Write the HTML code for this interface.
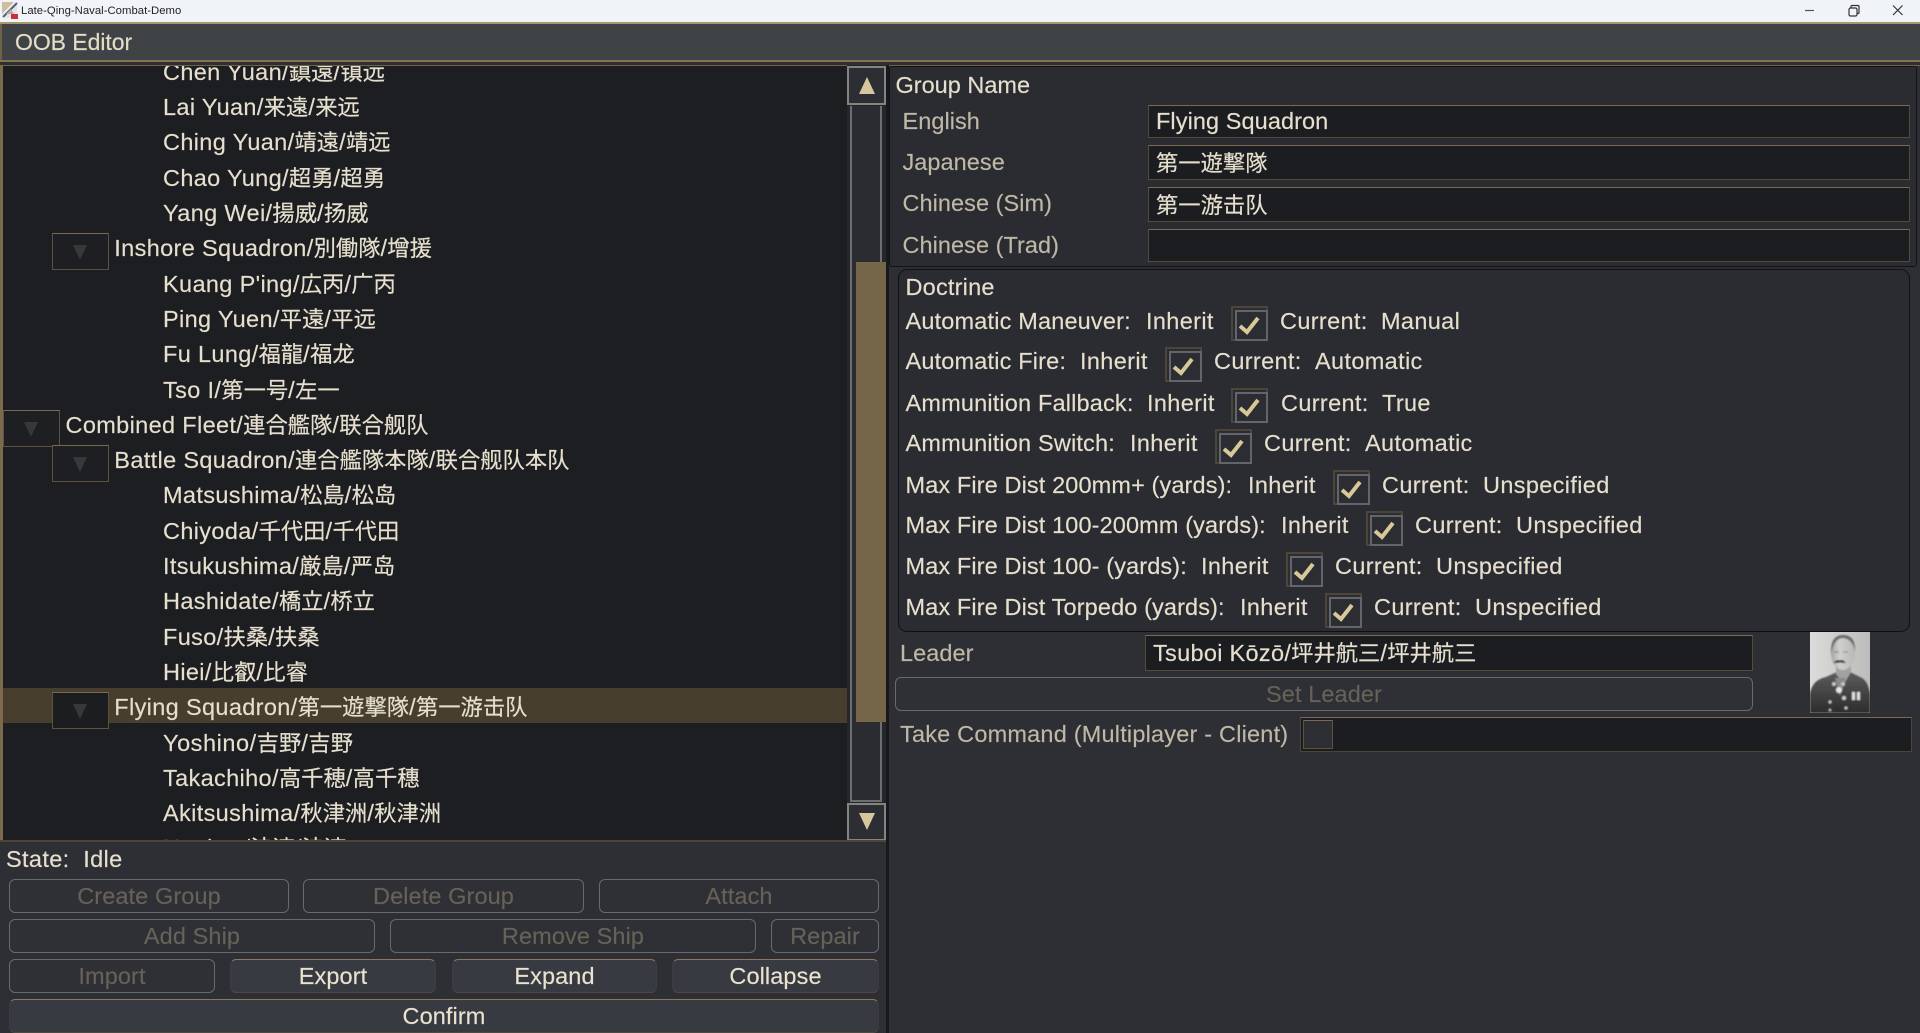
<!DOCTYPE html>
<html><head><meta charset="utf-8">
<style>
html,body{margin:0;padding:0;width:1920px;height:1033px;overflow:hidden;background:#2d2f34}
body{position:relative;font-family:"Liberation Sans","Noto Sans CJK JP",sans-serif;font-size:23.5px;letter-spacing:.35px;color:#e6dfcd;-webkit-text-stroke:.15px}
div,span,svg{position:absolute;box-sizing:border-box}
i{font-style:normal;letter-spacing:0;font-size:22.3px;font-family:"Noto Sans CJK JP",sans-serif}
.t{white-space:nowrap;line-height:36px;height:36px}
.r{position:absolute;left:0;width:843px;height:35.3px;line-height:35.3px;white-space:nowrap;top:calc(-12.2px + 35.3px*var(--n))}
.l3{padding-left:160px}.l2{padding-left:111.3px}.l1{padding-left:62.5px}
.bx{width:57px;height:37px;background:#1d1f23;border:1.5px solid #5d5240;border-top-color:#7a6b50;top:calc(-9.4px + 35.3px*var(--n))}
.bx:after{content:"";position:absolute;left:20px;top:11px;border-left:7.5px solid transparent;border-right:7.5px solid transparent;border-top:15px solid #37383a}
.b{height:34px;border:1.5px solid #666a6d;border-radius:6px;background:#2e3035;color:#666258;text-align:center;line-height:33px;white-space:nowrap;letter-spacing:.1px}
.e{background:#383a42;color:#e9e2cf;border:1px solid #3e3d3d;border-top:1.5px solid #8a7a5a;border-bottom-color:#4e4a40}
.lb{color:#bfb8a6;letter-spacing:.05px}
.dl{letter-spacing:.17px}.dm{letter-spacing:.12px}
.in{background:#1b1d21;border:1.5px solid #544b3b;border-top-color:#7a6b50;white-space:nowrap;padding-left:7px;line-height:31px;letter-spacing:.08px}
.cb{width:37px;height:35px;border:2px solid #4d4638;background:#2b2d32}
.cb:before{content:"";position:absolute;left:2px;top:2px;width:29px;height:27px;border:2px solid #62656a}
.cb svg{left:0;top:0}
.cb path{fill:none;stroke:#d8c898;stroke-width:4}
</style></head><body>

<!-- title bar -->
<div style="left:0;top:0;width:1920px;height:22px;background:#f0f4f9"></div>
<svg style="left:2px;top:2px" width="16" height="17" viewBox="0 0 16 17">
<path d="M0 0H12L0 12Z" fill="#cdbf9c"/><path d="M15 1V16H2Z" fill="#e4e4e6"/><path d="M1 15L15 1" stroke="#55607c" stroke-width="2"/><path d="M9 12h7v5H9z" fill="#c8333a"/><path d="M4 12l5-5 3 5z" fill="#b7b0a0"/>
</svg>
<div class="t" style="left:21px;top:2px;height:18px;line-height:18px;font-size:11.3px;letter-spacing:.03px;color:#222;-webkit-text-stroke:0">Late-Qing-Naval-Combat-Demo</div>
<svg style="left:1800px;top:0" width="120" height="22" viewBox="0 0 120 22" fill="none" stroke="#333">
<path d="M5 10.5H14" stroke-width="1.2" stroke="#555"/>
<rect x="49" y="8" width="8" height="8" rx="1.5" stroke-width="1.2"/><path d="M51 8V6.5Q51 5.5 52 5.5H58Q59 5.5 59 6.5V12.5Q59 13.5 58 13.5H57" stroke-width="1.2"/>
<path d="M93 5.5L102.500 15M102.500 5.500L93 15" stroke-width="1.2"/>
</svg>

<!-- header -->
<div style="left:0;top:22px;width:1920px;height:2px;background:#a8976e"></div>
<div style="left:0;top:24px;width:1920px;height:36px;background:#3f4346"></div>
<div style="left:0;top:60px;width:1920px;height:2px;background:#84754f"></div>
<div style="left:0;top:62px;width:1920px;height:3px;background:#2d2f34"></div>
<div style="left:0;top:64.500px;width:1920px;height:1.500px;background:#6f6246"></div>
<div class="t" style="left:15px;top:24px;font-size:23px;letter-spacing:-.05px;color:#e4dcc8">OOB Editor</div>
<div style="left:0;top:24px;width:2px;height:36px;background:#6f6246"></div>

<!-- tree -->
<div style="left:0;top:65px;width:3px;height:776px;background:#7b6a4b"></div>
<div style="left:3px;top:66px;width:844px;height:775px;background:#1c1e22;overflow:hidden">
  <div style="left:0;top:622px;width:844px;height:35px;background:#483e2e"></div>
  <div class="r l3" style="--n:0">Chen Yuan/<i>鎮遠</i>/<i>镇远</i></div>
  <div class="r l3" style="--n:1">Lai Yuan/<i>来遠</i>/<i>来远</i></div>
  <div class="r l3" style="--n:2">Ching Yuan/<i>靖遠</i>/<i>靖远</i></div>
  <div class="r l3" style="--n:3">Chao Yung/<i>超勇</i>/<i>超勇</i></div>
  <div class="r l3" style="--n:4">Yang Wei/<i>揚威</i>/<i>扬威</i></div>
  <div class="r l2" style="--n:5">Inshore Squadron/<i>別働隊</i>/<i>增援</i></div>
  <div class="r l3" style="--n:6">Kuang P'ing/<i>広丙</i>/<i>广丙</i></div>
  <div class="r l3" style="--n:7">Ping Yuen/<i>平遠</i>/<i>平远</i></div>
  <div class="r l3" style="--n:8">Fu Lung/<i>福龍</i>/<i>福龙</i></div>
  <div class="r l3" style="--n:9">Tso I/<i>第一号</i>/<i>左一</i></div>
  <div class="r l1" style="--n:10">Combined Fleet/<i>連合艦隊</i>/<i>联合舰队</i></div>
  <div class="r l2" style="--n:11">Battle Squadron/<i>連合艦隊本隊</i>/<i>联合舰队本队</i></div>
  <div class="r l3" style="--n:12">Matsushima/<i>松島</i>/<i>松岛</i></div>
  <div class="r l3" style="--n:13">Chiyoda/<i>千代田</i>/<i>千代田</i></div>
  <div class="r l3" style="--n:14">Itsukushima/<i>厳島</i>/<i>严岛</i></div>
  <div class="r l3" style="--n:15">Hashidate/<i>橋立</i>/<i>桥立</i></div>
  <div class="r l3" style="--n:16">Fuso/<i>扶桑</i>/<i>扶桑</i></div>
  <div class="r l3" style="--n:17">Hiei/<i>比叡</i>/<i>比睿</i></div>
  <div class="r l2" style="--n:18">Flying Squadron/<i>第一遊撃隊</i>/<i>第一游击队</i></div>
  <div class="r l3" style="--n:19;letter-spacing:.55px">Yoshino/<i>吉野</i>/<i>吉野</i></div>
  <div class="r l3" style="--n:20">Takachiho/<i>高千穂</i>/<i>高千穗</i></div>
  <div class="r l3" style="--n:21">Akitsushima/<i>秋津洲</i>/<i>秋津洲</i></div>
  <div class="r l3" style="--n:22">Naniwa/<i>浪速</i>/<i>浪速</i></div>
  <div class="bx" style="--n:5;left:49px"></div>
  <div class="bx" style="--n:10;left:0"></div>
  <div class="bx" style="--n:11;left:49px"></div>
  <div class="bx" style="--n:18;left:49px;background:#1b1d21"></div>
</div>

<!-- scrollbar -->
<div style="left:847px;top:65px;width:40px;height:776px;background:#24262a"></div>
<div style="left:850px;top:106px;width:32px;height:696px;border:2px solid #6b6e72;border-top:0;border-bottom:2px solid #6b6e72;background:#2a2c31"></div>
<div style="left:856px;top:262px;width:30px;height:460px;background:#75664a"></div>
<div style="left:847px;top:66px;width:39px;height:39px;background:#2c2e33;border:2px solid #85857f"></div>
<div style="left:859px;top:77px;width:0;height:0;border-left:8.500px solid transparent;border-right:8.500px solid transparent;border-bottom:17px solid #d6c79f"></div>
<div style="left:847px;top:803px;width:39px;height:38px;background:#2c2e33;border:2px solid #85857f"></div>
<div style="left:859px;top:813px;width:0;height:0;border-left:8.500px solid transparent;border-right:8.500px solid transparent;border-top:17px solid #d6c79f"></div>
<div style="left:886px;top:65px;width:2.500px;height:968px;background:#17191c"></div>

<!-- bottom left -->
<div style="left:0;top:840px;width:886px;height:1.500px;background:#4d4637"></div>
<div class="t" style="left:6px;top:841px">State:&nbsp; Idle</div>
<div class="b" style="left:9px;top:879px;width:280px">Create Group</div>
<div class="b" style="left:303px;top:879px;width:281px">Delete Group</div>
<div class="b" style="left:599px;top:879px;width:280px">Attach</div>
<div class="b" style="left:9px;top:919px;width:366px">Add Ship</div>
<div class="b" style="left:390px;top:919px;width:366px">Remove Ship</div>
<div class="b" style="left:771px;top:919px;width:108px">Repair</div>
<div class="b" style="left:9px;top:959px;width:206px">Import</div>
<div class="b e" style="left:230px;top:959px;width:206px">Export</div>
<div class="b e" style="left:452px;top:959px;width:205px">Expand</div>
<div class="b e" style="left:672px;top:959px;width:207px">Collapse</div>
<div class="b e" style="left:9px;top:999px;width:870px">Confirm</div>

<!-- group name panel -->
<div style="left:889px;top:66px;width:1028px;height:201px;background:#2a2c31;border:1.500px solid #111316;border-radius:3px"></div>
<div class="t" style="left:895.500px;top:67px;letter-spacing:0">Group Name</div>
<div class="t lb" style="left:902.500px;top:103px">English</div>
<div class="t lb" style="left:902.500px;top:144px">Japanese</div>
<div class="t lb" style="left:902.500px;top:185px">Chinese (Sim)</div>
<div class="t lb" style="left:902.500px;top:227px">Chinese (Trad)</div>
<div class="in" style="left:1148px;top:105px;width:762px;height:33px">Flying Squadron</div>
<div class="in" style="left:1148px;top:145px;width:762px;height:35px;line-height:33px"><i>第一遊撃隊</i></div>
<div class="in" style="left:1148px;top:187px;width:762px;height:35px;line-height:33px"><i>第一游击队</i></div>
<div class="in" style="left:1148px;top:229px;width:762px;height:33px"></div>

<!-- doctrine -->
<div style="left:898px;top:269px;width:1012px;height:363px;background:#2a2c31;border:1.500px solid #0e1013;border-radius:9px"></div>
<div class="t" style="left:905.500px;top:269px;letter-spacing:.2px">Doctrine</div>

<div class="t dl" style="left:905.500px;top:302.500px">Automatic Maneuver:</div><div class="t" style="left:1146px;top:302.500px">Inherit</div><div class="cb" style="left:1231px;top:306px"><svg width="33" height="31"><path d="M7 18L14 24L25 10"/></svg></div><div class="t" style="left:1280px;top:302.500px">Current:</div><div class="t" style="left:1381px;top:302.500px">Manual</div>

<div class="t dl" style="left:905.500px;top:343px">Automatic Fire:</div><div class="t" style="left:1080px;top:343px">Inherit</div><div class="cb" style="left:1165px;top:347px"><svg width="33" height="31"><path d="M7 18L14 24L25 10"/></svg></div><div class="t" style="left:1214px;top:343px">Current:</div><div class="t" style="left:1315px;top:343px">Automatic</div>

<div class="t dl" style="left:905.500px;top:384.500px">Ammunition Fallback:</div><div class="t" style="left:1147px;top:384.500px">Inherit</div><div class="cb" style="left:1231px;top:388px"><svg width="33" height="31"><path d="M7 18L14 24L25 10"/></svg></div><div class="t" style="left:1281px;top:384.500px">Current:</div><div class="t" style="left:1382px;top:384.500px">True</div>

<div class="t dl" style="left:905.500px;top:425px">Ammunition Switch:</div><div class="t" style="left:1130px;top:425px">Inherit</div><div class="cb" style="left:1215px;top:429px"><svg width="33" height="31"><path d="M7 18L14 24L25 10"/></svg></div><div class="t" style="left:1264px;top:425px">Current:</div><div class="t" style="left:1365px;top:425px">Automatic</div>

<div class="t dm" style="left:905.500px;top:466.500px">Max Fire Dist 200mm+ (yards):</div><div class="t" style="left:1248px;top:466.500px">Inherit</div><div class="cb" style="left:1333px;top:470px"><svg width="33" height="31"><path d="M7 18L14 24L25 10"/></svg></div><div class="t" style="left:1382px;top:466.500px">Current:</div><div class="t" style="left:1483px;top:466.500px">Unspecified</div>

<div class="t dm" style="left:905.500px;top:507px">Max Fire Dist 100-200mm (yards):</div><div class="t" style="left:1281px;top:507px">Inherit</div><div class="cb" style="left:1366px;top:511px"><svg width="33" height="31"><path d="M7 18L14 24L25 10"/></svg></div><div class="t" style="left:1415px;top:507px">Current:</div><div class="t" style="left:1516px;top:507px">Unspecified</div>

<div class="t dm" style="left:905.500px;top:548px">Max Fire Dist 100- (yards):</div><div class="t" style="left:1201px;top:548px">Inherit</div><div class="cb" style="left:1286px;top:552px"><svg width="33" height="31"><path d="M7 18L14 24L25 10"/></svg></div><div class="t" style="left:1335px;top:548px">Current:</div><div class="t" style="left:1436px;top:548px">Unspecified</div>

<div class="t dm" style="left:905.500px;top:589px">Max Fire Dist Torpedo (yards):</div><div class="t" style="left:1240px;top:589px">Inherit</div><div class="cb" style="left:1325px;top:593px"><svg width="33" height="31"><path d="M7 18L14 24L25 10"/></svg></div><div class="t" style="left:1374px;top:589px">Current:</div><div class="t" style="left:1475px;top:589px">Unspecified</div>

<!-- leader -->
<div class="t lb" style="left:900px;top:634.500px">Leader</div>
<div class="in" style="left:1145px;top:635px;width:608px;height:36px;line-height:33px;letter-spacing:.3px">Tsuboi Kōzō/<i>坪井航三</i>/<i>坪井航三</i></div>
<div class="b" style="left:895px;top:677px;width:858px">Set Leader</div>
<svg style="left:1810px;top:632px" width="60" height="81" viewBox="0 0 60 81">
<defs>
<filter id="f"><feGaussianBlur stdDeviation=".8"/></filter>
<linearGradient id="g" x1="0" x2="1" y1="0" y2="0"><stop offset="0" stop-color="#dcdcda"/><stop offset="1" stop-color="#bcbcba"/></linearGradient>
<linearGradient id="h" x1="0" x2="1" y1="0" y2="0"><stop offset="0" stop-color="#a4a4a2"/><stop offset=".35" stop-color="#d0d0ce"/><stop offset="1" stop-color="#b8b8b6"/></linearGradient>
<linearGradient id="j" x1="0" x2="0" y1="0" y2="1"><stop offset="0" stop-color="#5c5c5c"/><stop offset="1" stop-color="#2c2c2c"/></linearGradient>
</defs>
<rect width="60" height="81" fill="url(#g)"/>
<g filter="url(#f)">
<path d="M0 62Q2 48 16 45L27 40L40 40L50 45Q58 48 60 62V81H0Z" fill="url(#j)"/>
<path d="M26 34H41V40L34 52L26 42Z" fill="#a2a2a0"/>
<ellipse cx="33" cy="21" rx="12" ry="17" fill="url(#h)"/>
<path d="M21 22Q20 3 33 3Q46 3 45 20Q43 7 33 6Q24 6 21 22Z" fill="#6a6a6a"/>
<path d="M23 31Q27 27 30 28.500Q33 27 36 31L30 30.500Z" fill="#222"/>
<path d="M24 20h5M33 20h5" stroke="#7a7a7a" stroke-width="1.100"/>
<path d="M25 46L30 64L36 46Z" fill="#8a8a8a"/>
<circle cx="29" cy="58" r="3" fill="#e8e8e8"/><circle cx="24" cy="52" r="2" fill="#c4c4c4"/><circle cx="33" cy="52" r="2" fill="#c4c4c4"/>
<circle cx="34" cy="66" r="2" fill="#d0d0d0"/>
<rect x="42" y="60" width="3" height="8" fill="#e0e0e0"/><rect x="47" y="60" width="3" height="8" fill="#e0e0e0"/>
<circle cx="20" cy="70" r="1.500" fill="#ccc"/><circle cx="36" cy="76" r="1.500" fill="#ccc"/><circle cx="20" cy="78" r="1.300" fill="#bbb"/>
</g>
</svg>

<!-- take command -->
<div class="t lb" style="left:900px;top:716px;letter-spacing:.2px">Take Command (Multiplayer - Client)</div>
<div style="left:1300px;top:717px;width:612px;height:35px;background:#1b1d21;border:1px solid #4c4436;border-top:1.500px solid #7a6b50"></div>
<div style="left:1303px;top:720px;width:30px;height:29px;background:#2d2f34;border:1.500px solid #5d5240;border-top-color:#7a6b50"></div>
</body></html>
